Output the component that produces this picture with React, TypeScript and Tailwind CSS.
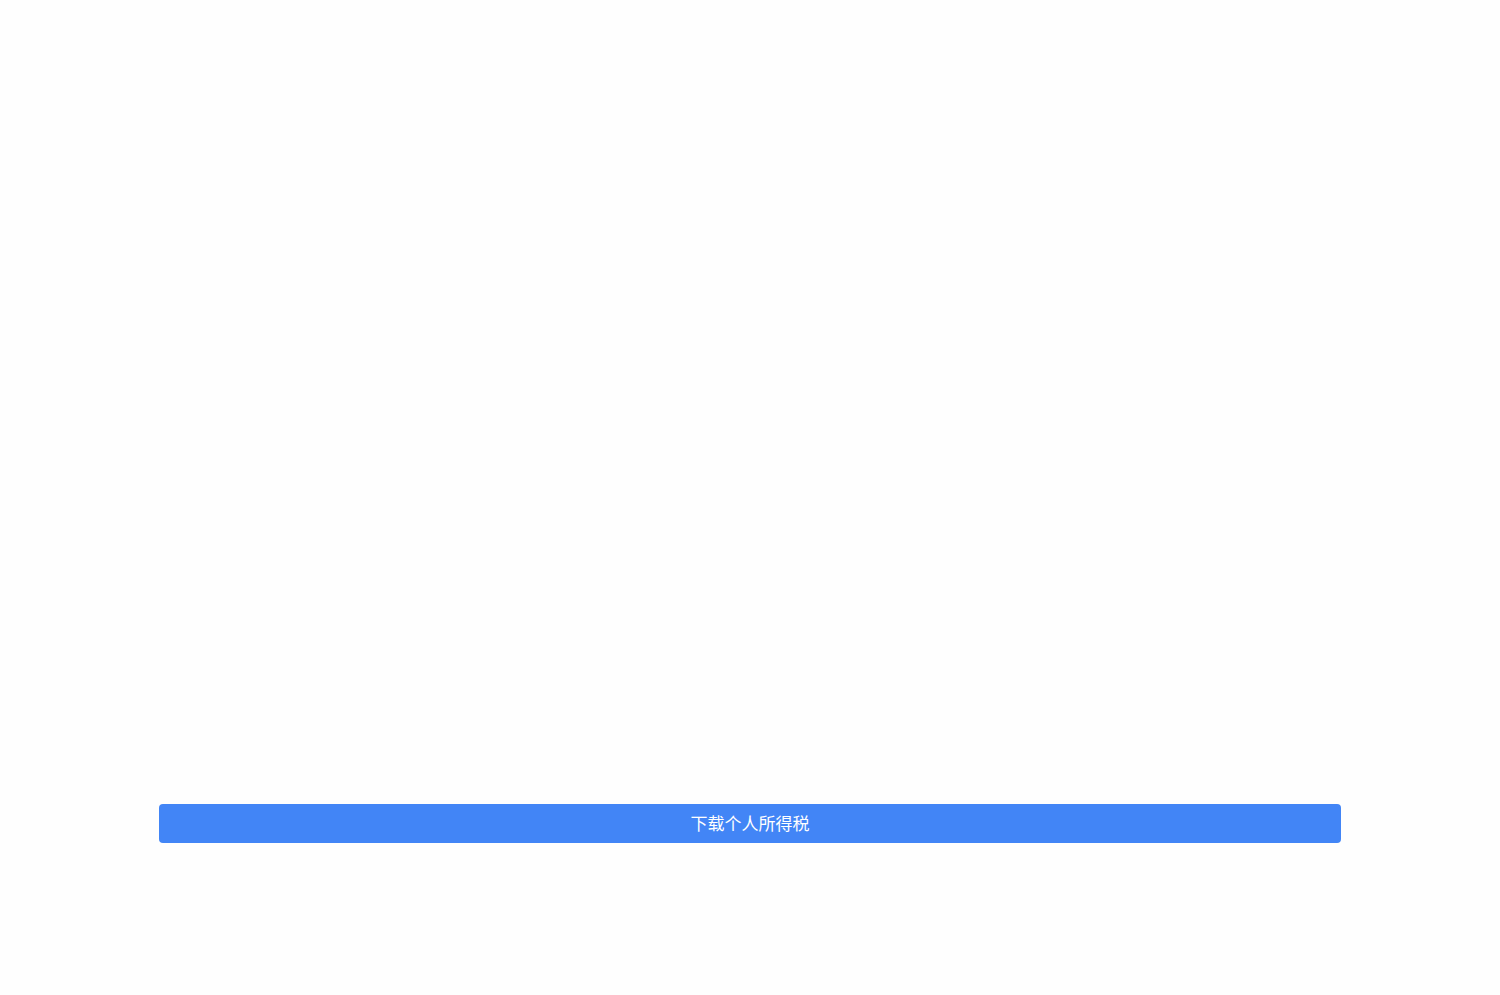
export default function App() {
  return (
    <main className="flex min-h-screen flex-col justify-end bg-[#fefefe] px-[159px] pb-[152px] font-['Noto_Sans_CJK_SC',sans-serif]">
      <button
        type="button"
        className="w-full cursor-pointer rounded bg-[#4285f6] pt-[7px] pb-2 text-center text-[17px] leading-6 text-white"
      >
        下载个人所得税
      </button>
    </main>
  );
}
